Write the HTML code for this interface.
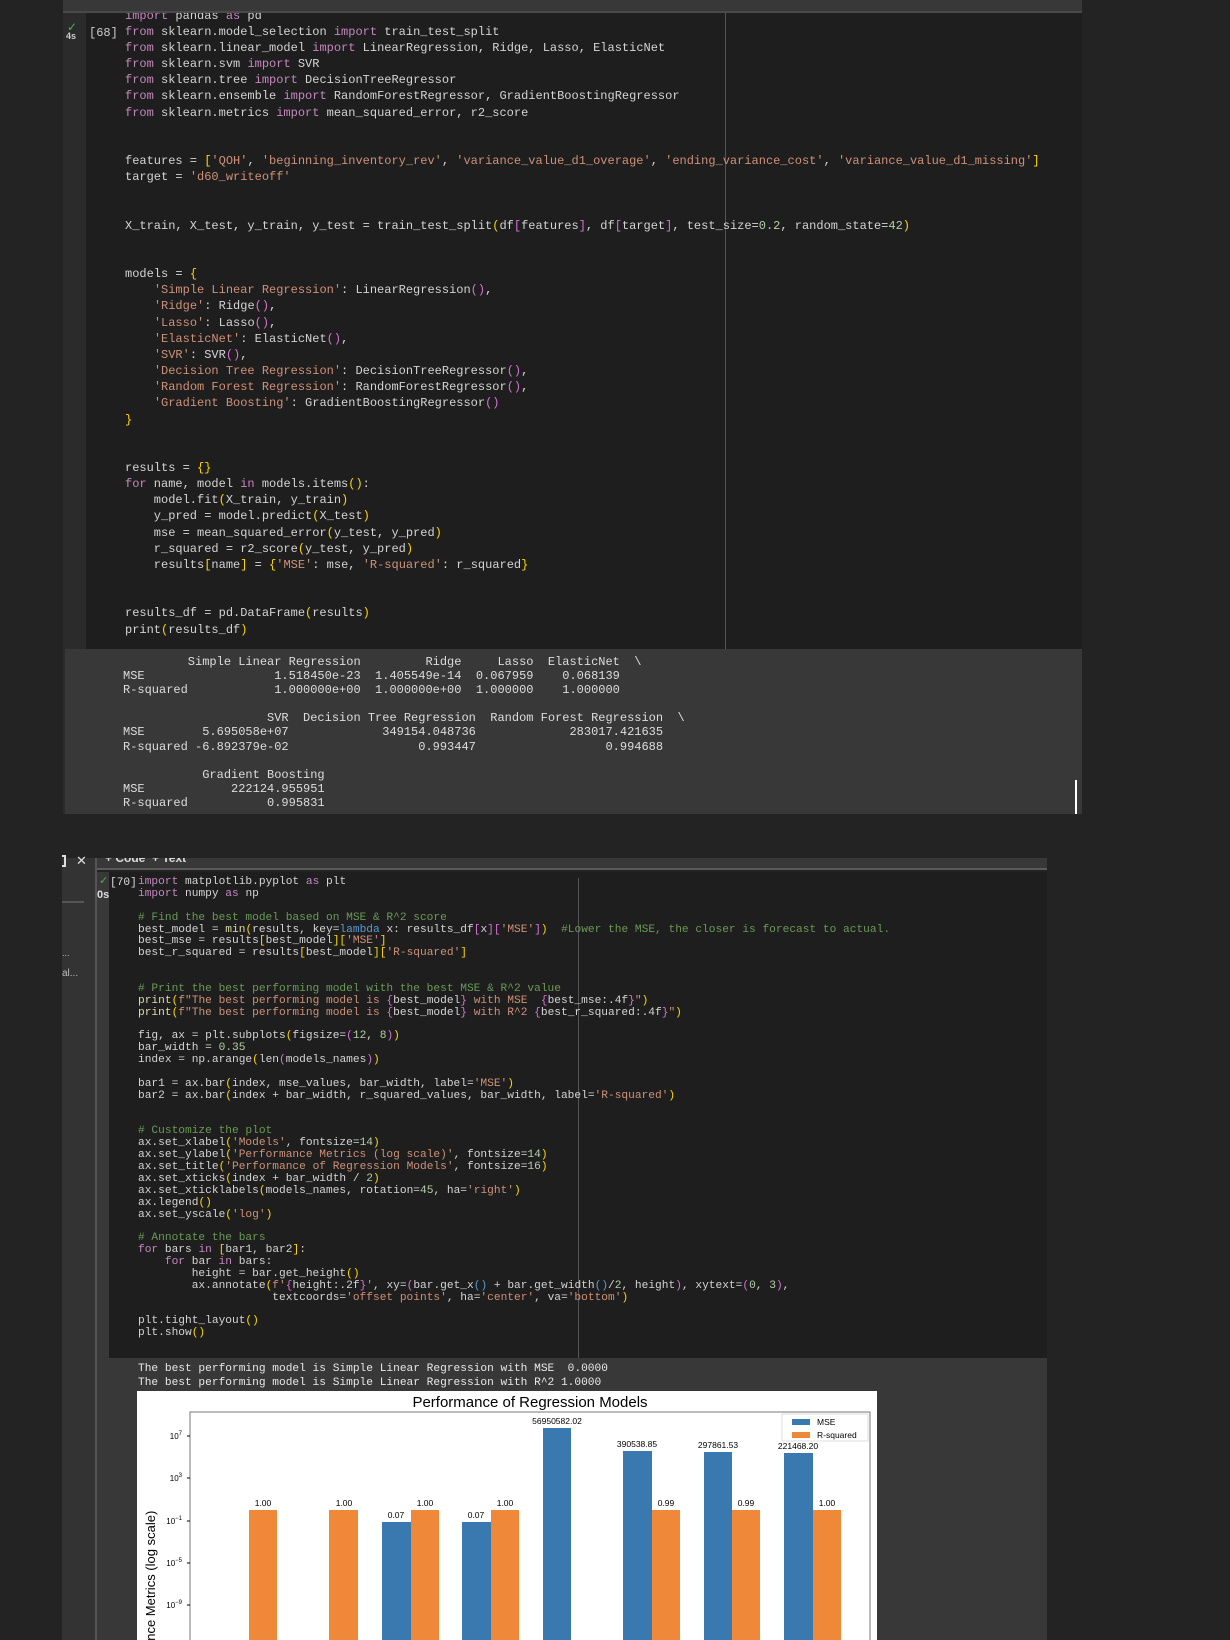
<!DOCTYPE html>
<html><head><meta charset="utf-8">
<style>
*{margin:0;padding:0;box-sizing:border-box}
body{width:1230px;height:1640px;background:#232323;position:relative;overflow:hidden;font-family:"Liberation Mono",monospace}
.a{position:absolute}
pre{font-family:"Liberation Mono",monospace;color:#d4d4d4;white-space:pre;position:absolute}
.k{color:#c586c0}.s{color:#ce9178}.c{color:#6a9955}.n{color:#b5cea8}.b1{color:#ffd700}.b2{color:#da70d6}.bl{color:#569cd6}.f{color:#dcdcaa}
</style></head><body>
<!-- Cell 1 -->
<div class="a" style="left:63px;top:0;width:1019px;height:13px;background:#383838;border-bottom:2px solid #4a4a4a"></div>
<div class="a" style="left:63px;top:13px;width:23px;height:636px;background:#2b2b2b"></div>
<div class="a" style="left:86px;top:13px;width:996px;height:636px;background:#1e1e1e;overflow:hidden">
<div class="a" style="left:639px;top:0;width:1px;height:636px;background:#555"></div>
<pre style="left:39px;top:-5.4px;font-size:12px;line-height:16.16px"><span class="k">import</span> pandas <span class="k">as</span> pd
<span class="k">from</span> sklearn.model_selection <span class="k">import</span> train_test_split
<span class="k">from</span> sklearn.linear_model <span class="k">import</span> LinearRegression, Ridge, Lasso, ElasticNet
<span class="k">from</span> sklearn.svm <span class="k">import</span> SVR
<span class="k">from</span> sklearn.tree <span class="k">import</span> DecisionTreeRegressor
<span class="k">from</span> sklearn.ensemble <span class="k">import</span> RandomForestRegressor, GradientBoostingRegressor
<span class="k">from</span> sklearn.metrics <span class="k">import</span> mean_squared_error, r2_score


features = <span class="b1">[</span><span class="s">'QOH'</span>, <span class="s">'beginning_inventory_rev'</span>, <span class="s">'variance_value_d1_overage'</span>, <span class="s">'ending_variance_cost'</span>, <span class="s">'variance_value_d1_missing'</span><span class="b1">]</span>
target = <span class="s">'d60_writeoff'</span>


X_train, X_test, y_train, y_test = train_test_split<span class="b1">(</span>df<span class="b2">[</span>features<span class="b2">]</span>, df<span class="b2">[</span>target<span class="b2">]</span>, test_size=<span class="n">0.2</span>, random_state=<span class="n">42</span><span class="b1">)</span>


models = <span class="b1">{</span>
    <span class="s">'Simple Linear Regression'</span>: LinearRegression<span class="b2">()</span>,
    <span class="s">'Ridge'</span>: Ridge<span class="b2">()</span>,
    <span class="s">'Lasso'</span>: Lasso<span class="b2">()</span>,
    <span class="s">'ElasticNet'</span>: ElasticNet<span class="b2">()</span>,
    <span class="s">'SVR'</span>: SVR<span class="b2">()</span>,
    <span class="s">'Decision Tree Regression'</span>: DecisionTreeRegressor<span class="b2">()</span>,
    <span class="s">'Random Forest Regression'</span>: RandomForestRegressor<span class="b2">()</span>,
    <span class="s">'Gradient Boosting'</span>: GradientBoostingRegressor<span class="b2">()</span>
<span class="b1">}</span>


results = <span class="b1">{}</span>
<span class="k">for</span> name, model <span class="k">in</span> models.items<span class="b1">()</span>:
    model.fit<span class="b1">(</span>X_train, y_train<span class="b1">)</span>
    y_pred = model.predict<span class="b1">(</span>X_test<span class="b1">)</span>
    mse = mean_squared_error<span class="b1">(</span>y_test, y_pred<span class="b1">)</span>
    r_squared = r2_score<span class="b1">(</span>y_test, y_pred<span class="b1">)</span>
    results<span class="b1">[</span>name<span class="b1">]</span> = <span class="b1">{</span><span class="s">'MSE'</span>: mse, <span class="s">'R-squared'</span>: r_squared<span class="b1">}</span>


results_df = pd.DataFrame<span class="b1">(</span>results<span class="b1">)</span>
print<span class="b1">(</span>results_df<span class="b1">)</span></pre>
</div>
<div class="a" style="left:67px;top:20px;color:#4caf50;font-size:12px;font-family:'DejaVu Sans',sans-serif">✓</div>
<div class="a" style="left:66px;top:31px;color:#ccc;font-size:9px;font-family:'Liberation Sans',sans-serif;font-weight:bold">4s</div>
<div class="a" style="left:89px;top:26px;color:#ccc;font-size:12px">[68]</div>
<!-- Output 1 -->
<div class="a" style="left:63px;top:649px;width:1019px;height:165px;background:#383838;border-left:2px solid #2b2b2b"></div>
<pre style="left:123px;top:655px;font-size:12px;line-height:14.1px;color:#ddd">         Simple Linear Regression         Ridge     Lasso  ElasticNet  \
MSE                  1.518450e-23  1.405549e-14  0.067959    0.068139   
R-squared            1.000000e+00  1.000000e+00  1.000000    1.000000   

                    SVR  Decision Tree Regression  Random Forest Regression  \
MSE        5.695058e+07             349154.048736             283017.421635   
R-squared -6.892379e-02                  0.993447                  0.994688   

           Gradient Boosting  
MSE            222124.955951  
R-squared           0.995831  </pre>
<div class="a" style="left:1075px;top:780px;width:2px;height:34px;background:#fff"></div>

<!-- Cell 2 -->
<div class="a" style="left:62px;top:858px;width:33px;height:782px;background:#333"></div>
<div class="a" style="left:62px;top:901px;width:22px;height:2px;background:#555"></div>
<div class="a" style="left:62px;top:855px;width:4px;height:12px;border:2px solid #ddd;border-left:none"></div>
<div class="a" style="left:76px;top:854px;color:#ddd;font-size:13px;font-family:'DejaVu Sans',sans-serif">✕</div>
<div class="a" style="left:62px;top:948px;color:#bbb;font-size:9px;font-family:'Liberation Sans',sans-serif">...</div>
<div class="a" style="left:62px;top:968px;color:#bbb;font-size:10px;font-family:'Liberation Sans',sans-serif">al...</div>
<div class="a" style="left:95px;top:858px;width:2px;height:782px;background:#555"></div>
<div class="a" style="left:97px;top:858px;width:950px;height:12px;background:#383838;border-bottom:2px solid #5a5a5a;overflow:hidden"><span style="position:absolute;left:8px;top:-7px;color:#ddd;font-size:12px;font-family:'Liberation Sans',sans-serif;font-weight:bold">+ Code &nbsp;+ Text</span></div>
<div class="a" style="left:97px;top:872px;width:12px;height:486px;background:#383838"></div>
<div class="a" style="left:109px;top:872px;width:938px;height:486px;background:#1e1e1e;overflow:hidden">
<div class="a" style="left:469px;top:6px;width:1px;height:480px;background:#555"></div>
<pre style="left:29px;top:5px;font-size:11.2px;line-height:11.87px"><span class="k">import</span> matplotlib.pyplot <span class="k">as</span> plt
<span class="k">import</span> numpy <span class="k">as</span> np

<span class="c"># Find the best model based on MSE &amp; R^2 score</span>
best_model = <span class="f">min</span><span class="b1">(</span>results, key=<span class="bl">lambda</span> x: results_df<span class="b2">[</span>x<span class="b2">][</span><span class="s">'MSE'</span><span class="b2">]</span><span class="b1">)</span>  <span class="c">#Lower the MSE, the closer is forecast to actual.</span>
best_mse = results<span class="b1">[</span>best_model<span class="b1">][</span><span class="s">'MSE'</span><span class="b1">]</span>
best_r_squared = results<span class="b1">[</span>best_model<span class="b1">][</span><span class="s">'R-squared'</span><span class="b1">]</span>


<span class="c"># Print the best performing model with the best MSE &amp; R^2 value</span>
<span class="f">print</span><span class="b1">(</span><span class="s">f"The best performing model is </span><span class="b2">{</span>best_model<span class="b2">}</span><span class="s"> with MSE  </span><span class="b2">{</span>best_mse:.4f<span class="b2">}</span><span class="s">"</span><span class="b1">)</span>
<span class="f">print</span><span class="b1">(</span><span class="s">f"The best performing model is </span><span class="b2">{</span>best_model<span class="b2">}</span><span class="s"> with R^2 </span><span class="b2">{</span>best_r_squared:.4f<span class="b2">}</span><span class="s">"</span><span class="b1">)</span>

fig, ax = plt.subplots<span class="b1">(</span>figsize=<span class="b2">(</span><span class="n">12</span>, <span class="n">8</span><span class="b2">)</span><span class="b1">)</span>
bar_width = <span class="n">0.35</span>
index = np.arange<span class="b1">(</span>len<span class="b2">(</span>models_names<span class="b2">)</span><span class="b1">)</span>

bar1 = ax.bar<span class="b1">(</span>index, mse_values, bar_width, label=<span class="s">'MSE'</span><span class="b1">)</span>
bar2 = ax.bar<span class="b1">(</span>index + bar_width, r_squared_values, bar_width, label=<span class="s">'R-squared'</span><span class="b1">)</span>


<span class="c"># Customize the plot</span>
ax.set_xlabel<span class="b1">(</span><span class="s">'Models'</span>, fontsize=<span class="n">14</span><span class="b1">)</span>
ax.set_ylabel<span class="b1">(</span><span class="s">'Performance Metrics (log scale)'</span>, fontsize=<span class="n">14</span><span class="b1">)</span>
ax.set_title<span class="b1">(</span><span class="s">'Performance of Regression Models'</span>, fontsize=<span class="n">16</span><span class="b1">)</span>
ax.set_xticks<span class="b1">(</span>index + bar_width / <span class="n">2</span><span class="b1">)</span>
ax.set_xticklabels<span class="b1">(</span>models_names, rotation=<span class="n">45</span>, ha=<span class="s">'right'</span><span class="b1">)</span>
ax.legend<span class="b1">()</span>
ax.set_yscale<span class="b1">(</span><span class="s">'log'</span><span class="b1">)</span>

<span class="c"># Annotate the bars</span>
<span class="k">for</span> bars <span class="k">in</span> <span class="b1">[</span>bar1, bar2<span class="b1">]</span>:
    <span class="k">for</span> bar <span class="k">in</span> bars:
        height = bar.get_height<span class="b1">()</span>
        ax.annotate<span class="b1">(</span><span class="s">f'</span><span class="b2">{</span>height:.2f<span class="b2">}</span><span class="s">'</span>, xy=<span class="b2">(</span>bar.get_x<span class="bl">()</span> + bar.get_width<span class="bl">()</span>/<span class="n">2</span>, height<span class="b2">)</span>, xytext=<span class="b2">(</span><span class="n">0</span>, <span class="n">3</span><span class="b2">)</span>,
                    textcoords=<span class="s">'offset points'</span>, ha=<span class="s">'center'</span>, va=<span class="s">'bottom'</span><span class="b1">)</span>

plt.tight_layout<span class="b1">()</span>
plt.show<span class="b1">()</span></pre>
</div>
<div class="a" style="left:99px;top:874px;color:#4caf50;font-size:11px;font-family:'DejaVu Sans',sans-serif">✓</div>
<div class="a" style="left:97px;top:889px;color:#ddd;font-size:11px;font-family:'Liberation Sans',sans-serif;font-weight:bold">0s</div>
<div class="a" style="left:110px;top:877px;color:#ddd;font-size:11.2px">[70]</div>
<!-- Output 2 -->
<div class="a" style="left:97px;top:1358px;width:950px;height:282px;background:#383838"></div>
<pre style="left:138px;top:1362px;font-size:11.2px;line-height:14px;color:#e8e8e8">The best performing model is Simple Linear Regression with MSE  0.0000
The best performing model is Simple Linear Regression with R^2 1.0000</pre>
<svg class="a" style="left:0;top:0" width="1230" height="1640" viewBox="0 0 1230 1640" font-family="Liberation Sans, DejaVu Sans, sans-serif">
<rect x="137" y="1391" width="740" height="249" fill="#fff"/>
<text x="530" y="1407" font-size="15" text-anchor="middle" fill="#000">Performance of Regression Models</text>
<rect x="190" y="1412" width="680" height="240" fill="none" stroke="#777" stroke-width="1"/>
<g fill="#000" font-size="8" text-anchor="end">
<text x="182" y="1439">10<tspan dy="-4" font-size="6">7</tspan></text>
<text x="182" y="1481">10<tspan dy="-4" font-size="6">3</tspan></text>
<text x="182" y="1524">10<tspan dy="-4" font-size="6">−1</tspan></text>
<text x="182" y="1566">10<tspan dy="-4" font-size="6">−5</tspan></text>
<text x="182" y="1608">10<tspan dy="-4" font-size="6">−9</tspan></text>
</g>
<g stroke="#000" stroke-width="1">
<line x1="187" y1="1436" x2="190" y2="1436"/><line x1="187" y1="1478" x2="190" y2="1478"/><line x1="187" y1="1521" x2="190" y2="1521"/><line x1="187" y1="1563" x2="190" y2="1563"/><line x1="187" y1="1605" x2="190" y2="1605"/>
</g>
<text transform="translate(155,1640) rotate(-90)" x="0" y="0" font-size="13" fill="#000" text-anchor="start" dx="-8">ance Metrics (log scale)</text>
<g fill="#3a78b0">
<rect x="382" y="1522" width="29" height="118"/>
<rect x="462" y="1522" width="29" height="118"/>
<rect x="543" y="1428" width="28" height="212"/>
<rect x="623" y="1451" width="29" height="189"/>
<rect x="704" y="1452" width="28" height="188"/>
<rect x="784" y="1453" width="29" height="187"/>
</g>
<g fill="#ef8838">
<rect x="249" y="1510" width="28" height="130"/>
<rect x="329" y="1510" width="29" height="130"/>
<rect x="411" y="1510" width="28" height="130"/>
<rect x="491" y="1510" width="28" height="130"/>
<rect x="652" y="1510" width="28" height="130"/>
<rect x="732" y="1510" width="28" height="130"/>
<rect x="813" y="1510" width="28" height="130"/>
</g>
<g font-size="8.5" fill="#000" text-anchor="middle">
<text x="263" y="1506">1.00</text><text x="344" y="1506">1.00</text><text x="425" y="1506">1.00</text><text x="505" y="1506">1.00</text>
<text x="396" y="1518">0.07</text><text x="476" y="1518">0.07</text>
<text x="557" y="1424">56950582.02</text>
<text x="637" y="1447">390538.85</text><text x="718" y="1448">297861.53</text><text x="798" y="1449">221468.20</text>
<text x="666" y="1506">0.99</text><text x="746" y="1506">0.99</text><text x="827" y="1506">1.00</text>
</g>
<rect x="782" y="1414" width="86" height="27" fill="#fff" stroke="#ddd"/>
<rect x="792" y="1419" width="18" height="6" fill="#3a78b0"/>
<rect x="792" y="1432" width="18" height="6" fill="#ef8838"/>
<text x="817" y="1425" font-size="8.5" fill="#000">MSE</text>
<text x="817" y="1438" font-size="8.5" fill="#000">R-squared</text>
</svg>
</body></html>
